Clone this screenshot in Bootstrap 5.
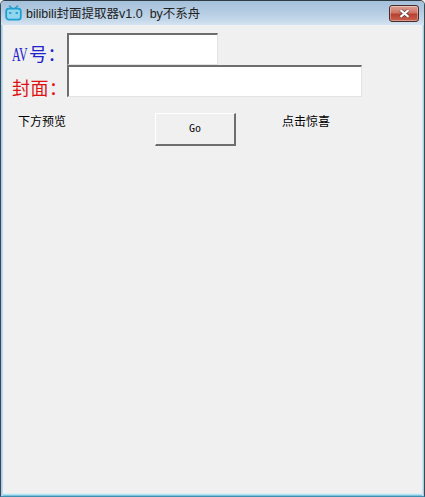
<!DOCTYPE html>
<html lang="zh">
<head>
<meta charset="utf-8">
<title>bilibili封面提取器</title>
<link href="https://cdn.jsdelivr.net/npm/bootstrap@5.3.0/dist/css/bootstrap.min.css" rel="stylesheet">
<style>
html,body{margin:0;height:497px;width:425px;overflow:hidden;background:#f0f0f0}
.win-frame{width:425px;height:497px;background:#f0f0f0;border:1px solid #3a4a55;border-top-color:#2f3b44;border-bottom-color:#3f8fb0;border-radius:5px 5px 0 0;font-family:"Liberation Sans","Noto Sans CJK SC",sans-serif;overflow:hidden;box-shadow:inset 1px 0 0 #a9cfe6,inset 2px 0 0 #bcdcf0,inset -1px 0 0 #a9cfe6,inset -2px 0 0 #cbe6f5,inset 0 -1px 0 #7cc4de,inset 0 -2px 0 #b9e2f0,inset 0 -3px 0 #d9eef5}
.title-strip{height:24px;background:linear-gradient(#a5c0da 0,#b4cce2 45%,#c4d8ea 80%,#d5e4f1 100%);padding-left:4px;padding-right:5px}
.title-text{font-size:12.5px;color:#222;margin-left:4px;white-space:pre;line-height:24px;padding-top:1px}
.close-box{width:30px;height:17px;border:1px solid #4a2b2b;border-radius:3px;background:linear-gradient(#dba294 0,#cf7464 45%,#b8412f 55%,#c9604e 100%);box-shadow:inset 0 0 0 1px rgba(255,255,255,.35)}
.form-area{padding:8px 0 0 11px}
.field-label{font-family:"Liberation Serif","Noto Sans CJK SC",serif;font-size:18px;line-height:20px;width:55px;white-space:nowrap;letter-spacing:.5px}
.latin-run{display:inline-block;width:17px;letter-spacing:0;transform:scaleX(.66);transform-origin:left center}
.label-av{color:#2222cc;margin-top:12px}
.label-cover{color:#dd1111;margin-top:14px}
.edit-box{height:32px;background:#fff;border:solid;border-width:2px 1px 1px 2px;border-color:#6e6e6e #e3e3e3 #e3e3e3 #6e6e6e;border-radius:0}
.edit-av{width:151px}
.edit-cover{width:295px}
.row-av,.row-cover{height:32px}
.bottom-row{margin-top:16px;padding-left:6px;font-size:12px;color:#000}
.hint-left{width:137px;line-height:16px;padding-top:1px}
.go-button{width:81px;height:33px;background:#f0f0f0;border:solid;border-width:1px 2px 2px 1px;border-color:#fff #6e6e6e #6e6e6e #fff;border-radius:0;padding:0 0 2px;font-family:"DejaVu Sans Mono","Liberation Mono",monospace;font-size:10px;color:#000}
.hint-right{margin-left:46px;line-height:16px;padding-top:1px}
</style>
</head>
<body>
<div class="win-frame">
  <div class="title-strip d-flex align-items-center">
    <svg width="17" height="16" viewBox="0 0 17 16" aria-hidden="true">
      <path d="M4.5 1 7 3.5M12.5 1 10 3.5" stroke="#1f9fd0" stroke-width="1.6" stroke-linecap="round"/>
      <rect x="1.2" y="3.6" width="14.6" height="11" rx="2.6" fill="#8fd6ee" stroke="#1f9fd0" stroke-width="1.8"/>
      <path d="M4 8h2.4M10.6 8H13" stroke="#1f8fc0" stroke-width="1.5"/>
    </svg>
    <span class="title-text">bilibili封面提取器v1.0  by不系舟</span>
    <span class="close-box ms-auto d-flex align-items-center justify-content-center">
      <svg width="13" height="9" viewBox="0 0 13 9" aria-hidden="true">
        <path d="M2.5 1.2 10.5 7.8M10.5 1.2 2.5 7.8" stroke="#4a2b2b" stroke-width="3.4"/>
        <path d="M2.5 1.2 10.5 7.8M10.5 1.2 2.5 7.8" stroke="#fff" stroke-width="2.2"/>
      </svg>
    </span>
  </div>
  <div class="form-area">
    <div class="row-av d-flex">
      <div class="field-label label-av"><span class="latin-run">AV</span>号：</div>
      <div class="edit-box edit-av"></div>
    </div>
    <div class="row-cover d-flex">
      <div class="field-label label-cover">封面：</div>
      <div class="edit-box edit-cover"></div>
    </div>
    <div class="bottom-row d-flex align-items-start">
      <div class="hint-left">下方预览</div>
      <button type="button" class="btn go-button">Go</button>
      <div class="hint-right">点击惊喜</div>
    </div>
  </div>
</div>
</body>
</html>
